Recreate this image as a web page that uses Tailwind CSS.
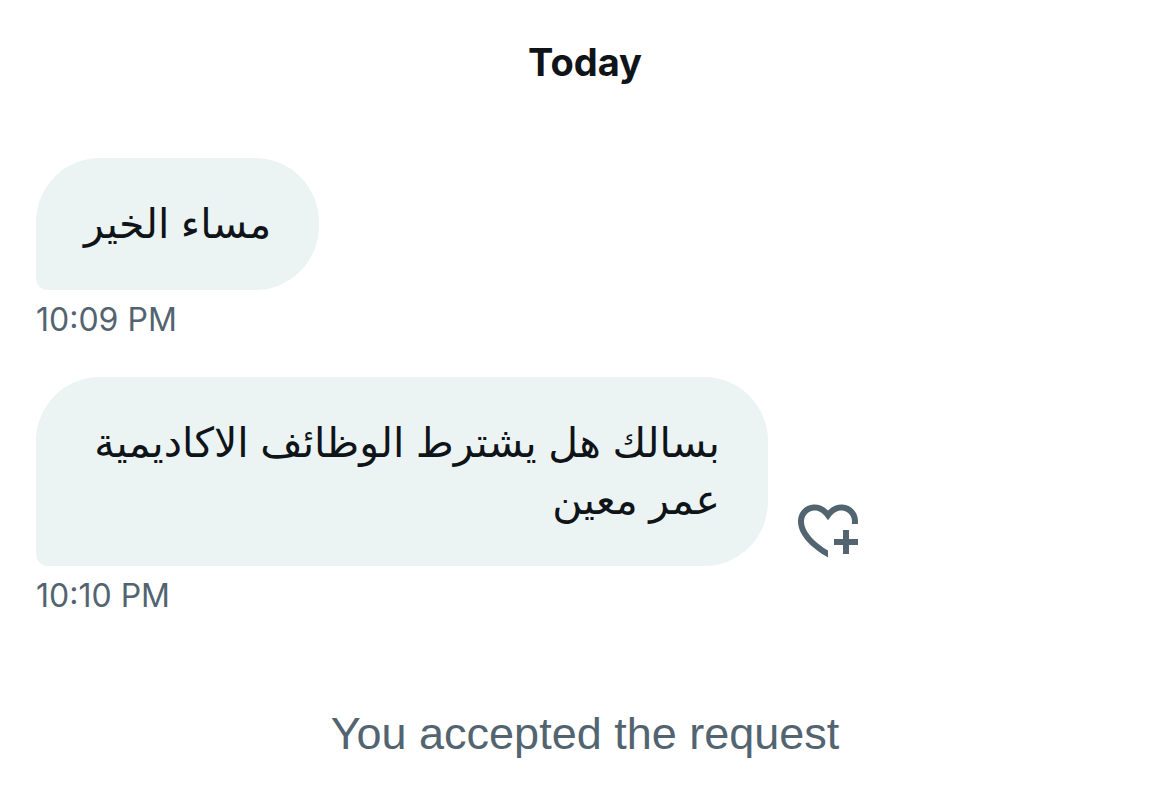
<!DOCTYPE html>
<html lang="en">
<head>
    <meta charset="UTF-8">
    <meta name="viewport" content="width=device-width, initial-scale=1.0">
    <title>Messages</title>
    <script src="https://cdn.jsdelivr.net/npm/@tailwindcss/browser@4"></script>
</head>
<body class="bg-white font-['Inter','DejaVu_Sans',sans-serif] text-[#0f1419]">
    <main class="min-h-screen px-9 pt-9 pb-6">
        <h2 class="text-center text-[38px] leading-[52px] font-bold">Today</h2>

        <!-- Messages -->
        <ol class="mt-[70px]">
            <li>
                <div class="w-fit rounded-[64px] rounded-bl-xl bg-[#ecf3f3] px-12 pt-[37px] pb-[38px]">
                    <p dir="rtl" lang="ar" class="text-[41px] leading-[57px]">مساء الخير</p>
                </div>
                <time datetime="22:09" class="mt-2 block text-[32px] leading-[44px] text-[#536471]">10:09 PM</time>
            </li>
            <li class="mt-[35px]">
                <div class="flex items-end gap-6">
                    <div class="max-w-2/3 rounded-[64px] rounded-bl-xl bg-[#ecf3f3] px-12 pt-[37px] pb-[38px]">
                        <p dir="rtl" lang="ar" class="text-[41px] leading-[57px]">بسالك هل يشترط الوظائف الاكاديمية عمر معين</p>
                    </div>
                    <button type="button" aria-label="Add reaction" class="text-[#536471]">
                        <svg class="size-18" viewBox="0 0 24 24" fill="currentColor">
                            <path d="M17 12v3h-3v2h3v3h2v-3h3v-2h-3v-3h-2zm-5 6.839c-3.871-2.34-6.053-4.639-7.127-6.609-1.112-2.04-1.031-3.7-.479-4.82.561-1.13 1.667-1.84 2.91-1.91 1.222-.06 2.68.51 3.892 2.16l.806 1.09.805-1.09c1.211-1.65 2.668-2.22 3.89-2.16 1.242.07 2.347.78 2.908 1.91.334.677.49 1.554.321 2.59h2.011c.153-1.283-.039-2.469-.539-3.48-.887-1.79-2.647-2.91-4.601-3.01-1.65-.09-3.367.56-4.796 2.01-1.43-1.45-3.147-2.1-4.798-2.01-1.954.1-3.714 1.22-4.601 3.01-.896 1.81-.846 4.17.514 6.67 1.353 2.48 4.003 5.12 8.382 7.67l.502.299v-2.32z" />
                        </svg>
                    </button>
                </div>
                <time datetime="22:10" class="mt-2 block text-[32px] leading-[44px] text-[#536471]">10:10 PM</time>
            </li>
        </ol>

        <p class="mt-22 text-center font-['Liberation_Sans',sans-serif] text-[45px] leading-[56px] text-[#536471]">You accepted the request</p>
    </main>
</body>
</html>
